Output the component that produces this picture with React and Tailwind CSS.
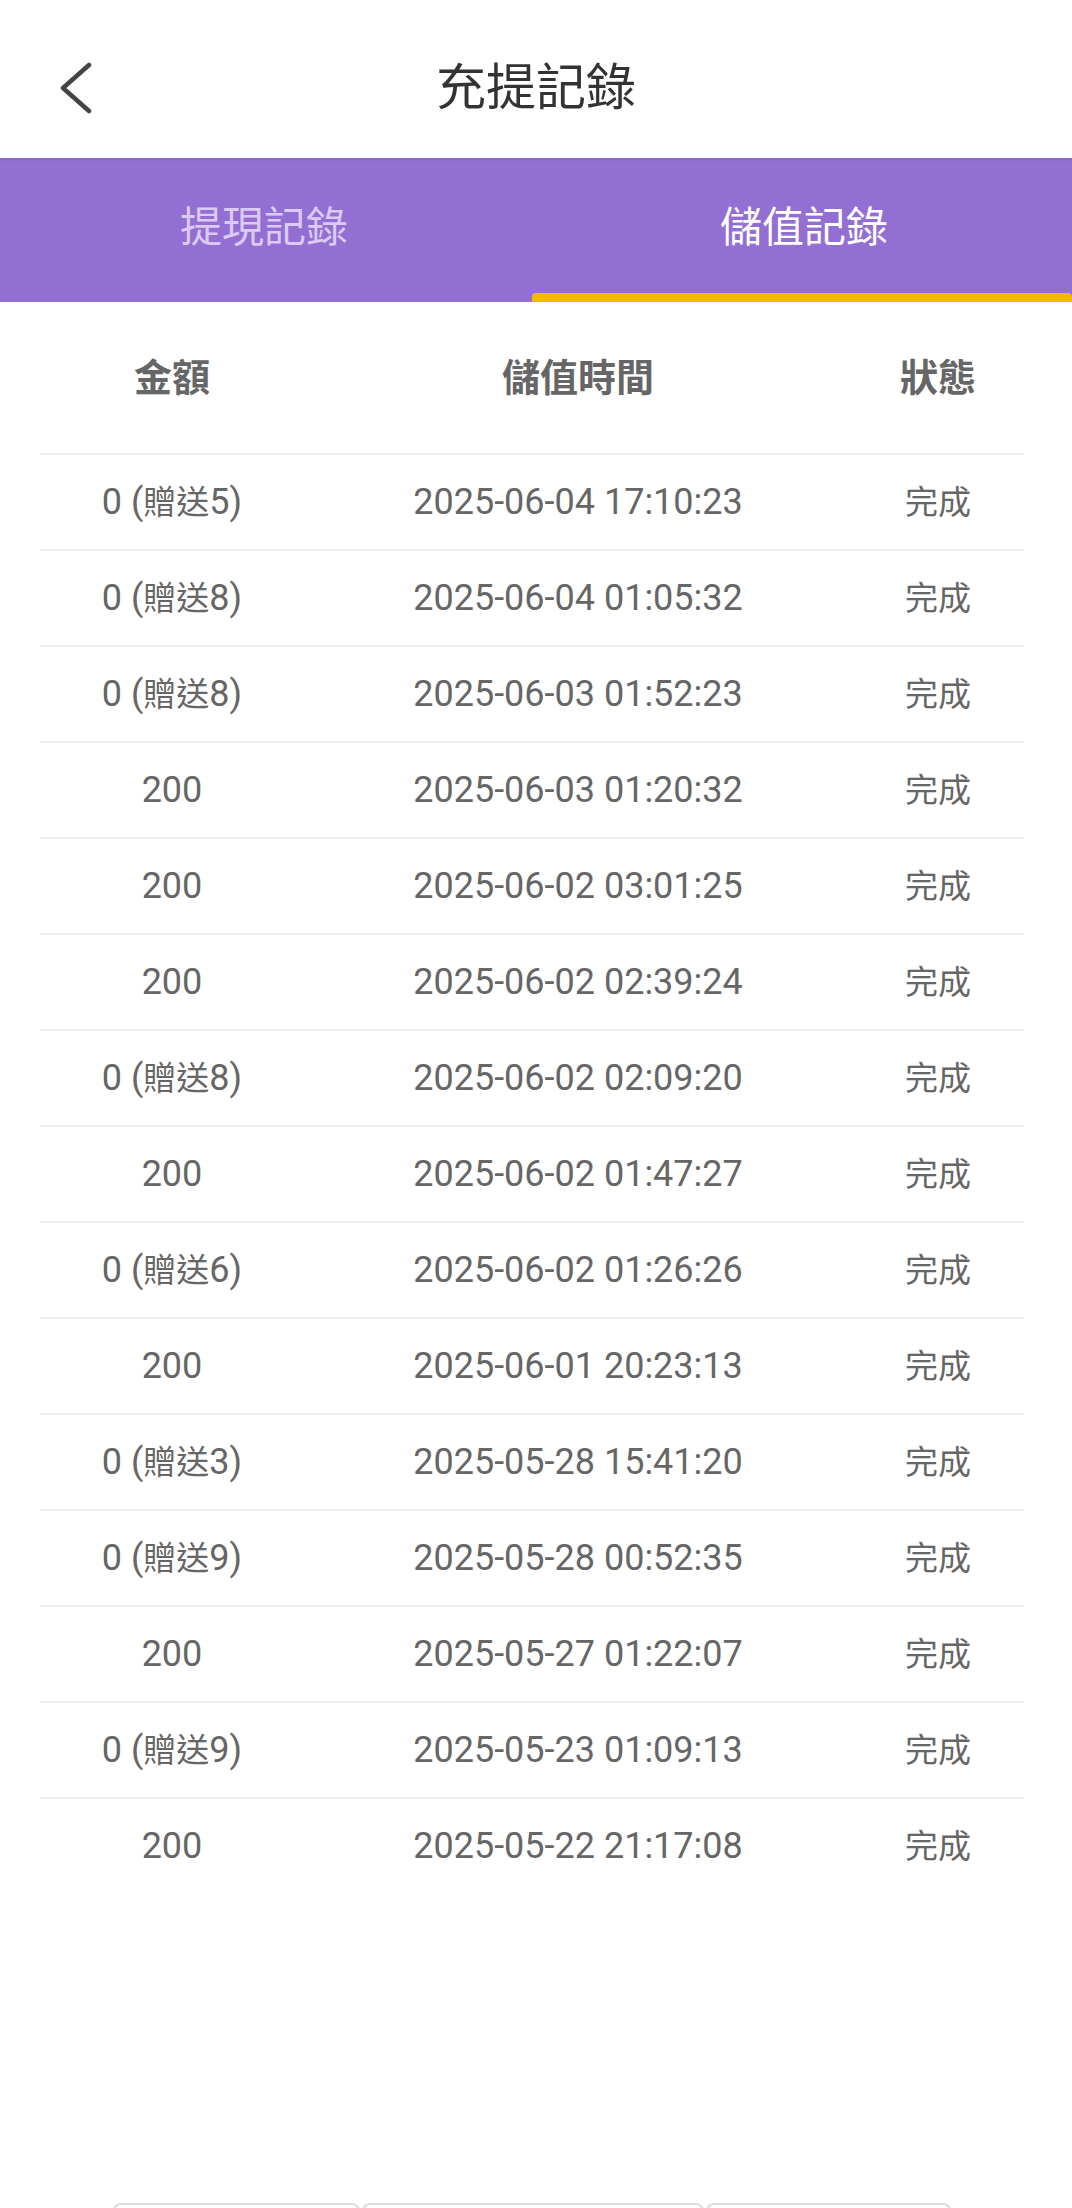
import React from 'react'

const rows = [
  { amount: '0', gift: '5', time: '2025-06-04 17:10:23' },
  { amount: '0', gift: '8', time: '2025-06-04 01:05:32' },
  { amount: '0', gift: '8', time: '2025-06-03 01:52:23' },
  { amount: '200', time: '2025-06-03 01:20:32' },
  { amount: '200', time: '2025-06-02 03:01:25' },
  { amount: '200', time: '2025-06-02 02:39:24' },
  { amount: '0', gift: '8', time: '2025-06-02 02:09:20' },
  { amount: '200', time: '2025-06-02 01:47:27' },
  { amount: '0', gift: '6', time: '2025-06-02 01:26:26' },
  { amount: '200', time: '2025-06-01 20:23:13' },
  { amount: '0', gift: '3', time: '2025-05-28 15:41:20' },
  { amount: '0', gift: '9', time: '2025-05-28 00:52:35' },
  { amount: '200', time: '2025-05-27 01:22:07' },
  { amount: '0', gift: '9', time: '2025-05-23 01:09:13' },
  { amount: '200', time: '2025-05-22 21:17:08' },
]

const font = 'font-["Roboto","Noto_Sans_CJK_TC",sans-serif]'

export default function App() {
  return (
    <div className={`h-[2208px] w-[1072px] overflow-hidden bg-white ${font}`}>
      {/* header */}
      <div className="relative z-10 h-[158px] pt-[18px] flex items-center bg-white shadow-[0_1px_3px_rgba(0,0,0,0.12)]">
        <div className="w-[150px] pl-[60px] flex items-center">
          <svg width="32" height="52" viewBox="0 0 32 52" fill="none">
            <polyline points="29,3 3,26 29,49" stroke="#444" strokeWidth="4.5" strokeLinecap="round" strokeLinejoin="round" />
          </svg>
        </div>
        <div className="flex-1 text-center text-[50px] text-[#333] leading-none">充提記錄</div>
        <div className="w-[150px]" />
      </div>

      {/* tabs */}
      <div className="h-[144px] flex bg-[#936ed3]">
        <div className="flex-1 flex flex-col">
          <div className="flex-1 flex items-center justify-center pt-[4px] pr-[8px] text-[42px] text-[#dccaf6] leading-none">提現記錄</div>
          <div className="h-[9px]" />
        </div>
        <div className="flex-1 flex flex-col">
          <div className="flex-1 flex items-center justify-center pt-[4px] text-[42px] text-white leading-none">儲值記錄</div>
          <div className="h-[9px] ml-[-4px] rounded-t-[4px] bg-[#f5b800]" />
        </div>
      </div>

      {/* table */}
      <div className="ml-[40px] w-[984px]">
        <div className="h-[151px] grid grid-cols-[264px_548px_172px] items-center text-[38px] font-bold text-[#666] leading-none">
          <div className="text-center">金額</div>
          <div className="text-center">儲值時間</div>
          <div className="text-center">狀態</div>
        </div>
        {rows.map((r, i) => (
          <div key={i} className="h-[96px] border-t-2 border-[#eeeeee] grid grid-cols-[264px_548px_172px] items-center text-[36px] text-[#666] leading-none">
            <div className="text-center">
              {r.amount}
              {r.gift && (
                <>
                  {' ('}
                  <span className="text-[33px]">贈送</span>
                  {r.gift})
                </>
              )}
            </div>
            <div className="text-center">{r.time}</div>
            <div className="text-center text-[33px]">完成</div>
          </div>
        ))}
      </div>

      {/* bottom buttons (cut off) */}
      <div className="mt-[310px] ml-[113px] flex gap-[2px]">
        <div className="w-[247px] h-[60px] rounded-t-[8px] border-2 border-b-0 border-[#dddddd]" />
        <div className="w-[342px] h-[60px] rounded-t-[8px] border-2 border-b-0 border-[#dddddd]" />
        <div className="w-[245px] h-[60px] rounded-t-[8px] border-2 border-b-0 border-[#dddddd]" />
      </div>
    </div>
  )
}
